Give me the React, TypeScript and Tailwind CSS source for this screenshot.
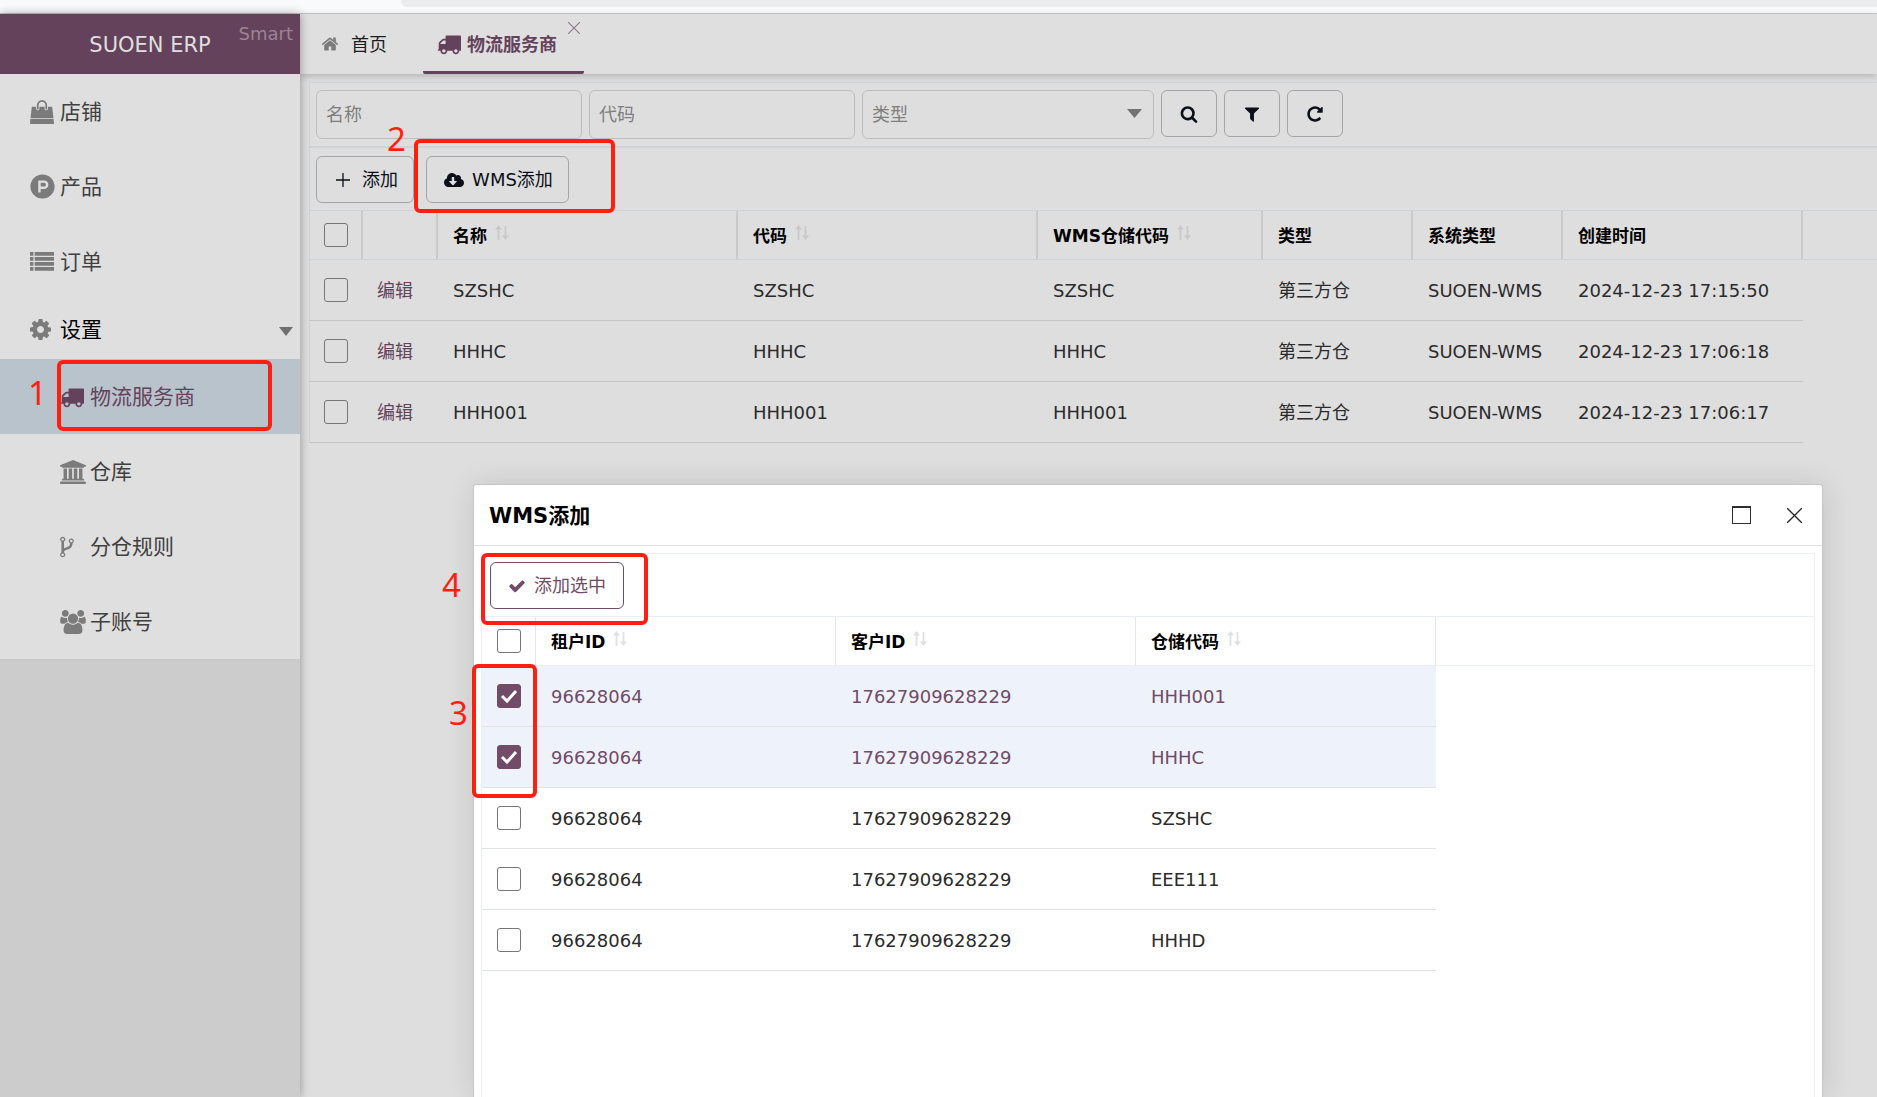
import { useState } from "react";
import type { ReactNode } from "react";
import { FaCloudDownloadAlt, FaProductHunt } from "react-icons/fa";

const paths = {
  truck:
    "M640 1408q0-52-38-90t-90-38-90 38-38 90 38 90 90 38 90-38 38-90zm-384-512h384v-256h-158q-13 0-22 9l-195 195q-9 9-9 22v30zm1280 512q0-52-38-90t-90-38-90 38-38 90 38 90 90 38 90-38 38-90zm256-1088v1024q0 15-4 26.5t-13.5 18.5-16.5 11.5-23.5 6-22.5 2-25.5 0-22.5-.5q0 106-75 181t-181 75-181-75-75-181h-384q0 106-75 181t-181 75-181-75-75-181h-64q-3 0-22.5.5t-25.5 0-22.5-2-23.5-6-16.5-11.5-13.5-18.5-4-26.5q0-26 19-45t45-19v-320q0-8-.5-35t0-38 2.5-34.5 6.5-37 14-30.5 22.5-30l198-198q19-19 50.5-32t58.5-13h160v-192q0-26 19-45t45-19h1024q26 0 45 19t19 45z",
  search:
    "M1216 832q0-185-131.5-316.5t-316.5-131.5-316.5 131.5-131.5 316.5 131.5 316.5 316.5 131.5 316.5-131.5 131.5-316.5zm512 832q0 52-38 90t-90 38q-54 0-90-38l-343-342q-179 124-399 124-143 0-273.5-55.5t-225-150-150-225-55.5-273.5 55.5-273.5 150-225 225-150 273.5-55.5 273.5 55.5 225 150 150 225 55.5 273.5q0 220-124 399l343 343q37 37 37 90z",
  filter:
    "M1595 295q17 41-14 70l-493 493v742q0 42-39 59-13 5-25 5-27 0-45-19l-256-256q-19-19-19-45v-486l-493-493q-31-29-14-70 17-39 59-39h1280q42 0 59 39z",
  repeat:
    "M1664 256v448q0 26-19 45t-45 19h-448q-42 0-59-40-17-39 14-69l138-138q-148-137-349-137-104 0-198.5 40.5t-163.5 109.5-109.5 163.5-40.5 198.5 40.5 198.5 109.5 163.5 163.5 109.5 198.5 40.5q119 0 225-52t179-147q7-10 23-12 15 0 25 9l137 138q9 8 9.5 20.5t-7.5 22.5q-109 132-264 204.5t-327 72.5q-156 0-298-61t-245-164-164-245-61-298 61-298 164-245 245-164 298-61q147 0 284.5 55.5t244.5 156.5l130-129q29-31 70-14 39 17 39 59z",
  home: "M1472 992v480q0 26-19 45t-45 19h-384v-384h-256v384h-384q-26 0-45-19t-19-45v-480q0-1 .5-3t.5-3l575-474 575 474q1 2 1 6zm223-69l-62 74q-8 9-21 11h-3q-13 0-21-7l-692-577-692 577q-12 8-24 7-13-2-21-11l-62-74q-8-10-7-23.5t11-21.5l719-599q32-26 76-26t76 26l244 204v-195q0-14 9-23t23-9h192q14 0 23 9t9 23v408l219 182q10 8 11 21.5t-7 23.5z",
  bag: "M1757 1408l35 313q3 28-16 50-19 21-48 21h-1664q-29 0-48-21-19-22-16-50l35-313h1722zm-93-839l86 775h-1708l86-775q3-24 21-40.5t43-16.5h256v128q0 53 37.5 90.5t90.5 37.5 90.5-37.5 37.5-90.5v-128h384v128q0 53 37.5 90.5t90.5 37.5 90.5-37.5 37.5-90.5v-128h256q25 0 43 16.5t21 40.5zm-384-185v256q0 26-19 45t-45 19-45-19-19-45v-256q0-106-75-181t-181-75-181 75-75 181v256q0 26-19 45t-45 19-45-19-19-45v-256q0-159 112.5-271.5t271.5-112.5 271.5 112.5 112.5 271.5z",
  list: "M0 140h256v290h-256zM350 140h1442v290h-1442zM0 516h256v290h-256zM350 516h1442v290h-1442zM0 892h256v290h-256zM350 892h1442v290h-1442zM0 1268h256v290h-256zM350 1268h1442v290h-1442z",
  cog: "M1152 896q0-106-75-181t-181-75-181 75-75 181 75 181 181 75 181-75 75-181zm512-109v222q0 12-8 23t-20 13l-185 28q-19 54-39 91 35 50 107 138 10 12 10 25t-9 23q-27 37-99 108t-94 71q-12 0-26-9l-138-108q-44 23-91 38-16 136-29 186-7 28-36 28h-222q-14 0-24.5-8.5t-11.5-21.5l-28-184q-49-16-90-37l-141 107q-10 9-25 9-14 0-25-11-126-114-165-168-7-10-7-23 0-12 8-23 15-21 51-66.5t54-70.5q-27-50-41-99l-183-27q-13-2-21-12.5t-8-23.5v-222q0-12 8-23t19-13l186-28q14-46 39-92-40-57-107-138-10-12-10-24 0-10 9-23 26-36 98.5-107.5t94.5-71.5q13 0 26 10l138 107q44-23 91-38 16-136 29-186 7-28 36-28h222q14 0 24.5 8.5t11.5 21.5l28 184q49 16 90 37l142-107q9-9 24-9 13 0 25 10 129 119 165 170 7 8 7 22 0 12-8 23-15 21-51 66.5t-54 70.5q26 50 41 98l183 28q13 2 21 12.5t8 23.5z",
  bank: "M960 0l960 384v128h-128q0 26-20.500 45t-48.500 19h-1526q-28 0-48.500-19t-20.500-45h-128v-128zm-704 640h256v768h128v-768h256v768h128v-768h256v768h128v-768h256v768h59q28 0 48.500 19t20.500 45v64h-1664v-64q0-26 20.500-45t48.500-19h59v-768zm1595 960q28 0 48.500 19t20.500 45v128h-1920v-128q0-26 20.500-45t48.500-19h1782z",
  fork: "M672 1472q0-40-28-68t-68-28-68 28-28 68 28 68 68 28 68-28 28-68zm0-1152q0-40-28-68t-68-28-68 28-28 68 28 68 68 28 68-28 28-68zm640 128q0-40-28-68t-68-28-68 28-28 68 28 68 68 28 68-28 28-68zm96 0q0 52-26 96.5t-70 69.5q-2 287-226 414-67 38-203 81-128 40-169.5 71t-41.5 100v26q44 25 70 69.5t26 96.5q0 80-56 136t-136 56-136-56-56-136q0-52 26-96.5t70-69.5v-820q-44-25-70-69.5t-26-96.5q0-80 56-136t136-56 136 56 56 136q0 52-26 96.5t-70 69.5v497q54-26 154-57 55-17 87.5-29.5t70.5-31 59-39.5 40.5-51 28-69.5 8.5-91.5q-44-25-70-69.5t-26-96.5q0-80 56-136t136-56 136 56 56 136z",
  users:
    "M529 896q-162 5-265 128h-134q-82 0-138-40.5t-56-118.5q0-353 124-353 6 0 43.5 21t97.5 42.5 119 21.5q67 0 133-23-5 37-5 66 0 139 81 256zm1071 637q0 120-73 189.5t-194 69.5h-874q-121 0-194-69.5t-73-189.5q0-53 3.5-103.5t14-109 26.5-108.5 43-97.5 62-81 85.5-53.5 111.5-20q10 0 43 21.5t73 48 107 48 135 21.5 135-21.5 107-48 73-48 43-21.5q61 0 111.5 20t85.5 53.5 62 81 43 97.5 26.5 108.5 14 109 3.5 103.5zm-1024-1277q0 106-75 181t-181 75-181-75-75-181 75-181 181-75 181 75 75 181zm704 384q0 159-112.5 271.5t-271.5 112.5-271.5-112.5-112.5-271.5 112.5-271.5 271.5-112.5 271.5 112.5 112.5 271.5zm576 225q0 78-56 118.5t-138 40.5h-134q-103-123-265-128 81-117 81-256 0-29-5-66 66 23 133 23 59 0 119-21.5t97.5-42.5 43.5-21q124 0 124 353zm-128-609q0 106-75 181t-181 75-181-75-75-181 75-181 181-75 181 75 75 181z",
  check:
    "M1671 566q0 40-28 68l-724 724-136 136q-28 28-68 28t-68-28l-136-136-362-362q-28-28-28-68t28-68l136-136q28-28 68-28t68 28l294 295 656-657q28-28 68-28t68 28l136 136q28 28 28 68z",
};

function Icon({
  name,
  className,
  viewBox = "0 0 1792 1792",
}: {
  name: keyof typeof paths;
  className: string;
  viewBox?: string;
}) {
  return (
    <svg viewBox={viewBox} fill="currentColor" className={className} aria-hidden="true">
      <path d={paths[name]} />
    </svg>
  );
}

function SortIcon() {
  return (
    <svg viewBox="0 0 14 16" className="h-4 w-3.5" aria-hidden="true">
      <path d="M3.500 15V2M10.500 1v12" fill="none" stroke="currentColor" strokeWidth="1.8" />
      <path d="M3.500 0 7 4.500H0zM10.500 15l3.500-4.500H7z" fill="currentColor" />
    </svg>
  );
}

function CloseIcon({ className }: { className: string }) {
  return (
    <svg viewBox="0 0 14 14" className={className} fill="none" stroke="currentColor" aria-hidden="true">
      <path d="M0 0l14 14M14 0L0 14" strokeWidth="1.3" />
    </svg>
  );
}

function Checkbox({ label, defaultChecked = false }: { label: string; defaultChecked?: boolean }) {
  const [checked, setChecked] = useState(defaultChecked);
  return (
    <span className="relative grid size-6">
      <input
        type="checkbox"
        aria-label={label}
        checked={checked}
        onChange={(e) => setChecked(e.target.checked)}
        className="size-6 appearance-none rounded-[3px] border border-[#767676] checked:border-[#714b67] checked:bg-[#714b67]"
      />
      {checked && (
        <svg viewBox="0 0 24 24" className="pointer-events-none absolute inset-0 size-6" aria-hidden="true">
          <path d="M5 12l5 5 9-10" fill="none" stroke="#fff" strokeWidth="3" />
        </svg>
      )}
    </span>
  );
}

// Red frame with a step number, laid over the control it wraps
function Step({ n, frame, digit }: { n: number; frame: string; digit: string }) {
  return (
    <>
      <span className={`pointer-events-none absolute z-20 rounded-md border-4 border-[#ff1f10] ${frame}`} />
      <span
        className={`pointer-events-none absolute z-20 font-['Noto_Sans',sans-serif] text-[33px] leading-8 text-[#ff1f10] ${digit}`}
      >
        {n}
      </span>
    </>
  );
}

function MenuItem({ icon, label }: { icon: ReactNode; label: string }) {
  return (
    <li>
      <a href="#" className="flex h-[75px] items-center pl-[30px] text-[#404040]">
        <span className="flex w-[30px] text-[#7b7b7b]">{icon}</span>
        <span className="pt-[3px]">{label}</span>
      </a>
    </li>
  );
}

function SubItem({
  icon,
  label,
  active,
  children,
}: {
  icon: ReactNode;
  label: string;
  active?: boolean;
  children?: ReactNode;
}) {
  return (
    <li className={active ? "relative bg-[#b9c3cc]" : "relative"}>
      <a
        href="#"
        className={`flex h-[75px] items-center pl-[60px] ${active ? "text-[#64425b]" : "text-[#404040]"}`}
      >
        <span className={`flex w-[30px] ${active ? "" : "text-[#7b7b7b]"}`}>{icon}</span>
        <span className="pt-[3px]">{label}</span>
      </a>
      {children}
    </li>
  );
}

function Sidebar() {
  return (
    <aside className="z-10 w-[300px] shrink-0 bg-[#cccccc] shadow-[0_0_9px_rgba(0,0,0,0.35)]">
      <div className="relative flex h-[60px] items-center justify-center bg-[#64425b] pt-1 text-[21px] text-[#dfdfdf]">
        SUOEN ERP
        <span className="absolute top-1.5 right-[7px] text-lg text-[#9b8495]">Smart</span>
      </div>
      <nav className="border-b border-[#c8c8c8] bg-[#dfdfdf] text-[21px]">
        <ul>
          <MenuItem icon={<Icon name="bag" className="size-6" />} label="店铺" />
          <MenuItem icon={<FaProductHunt className="size-[25px]" />} label="产品" />
          <MenuItem icon={<Icon name="list" className="size-6" />} label="订单" />
          <li>
            <button type="button" className="flex h-[60px] w-full items-center pr-[7px] pl-[30px] text-black">
              <span className="flex w-[30px] text-[#7b7b7b]">
                <Icon name="cog" viewBox="128 128 1536 1536" className="size-[21px]" />
              </span>
              <span className="pt-[3px]">设置</span>
              <svg viewBox="0 0 14 9" className="mt-1 ml-auto h-[9px] w-3.5 fill-[#6f6f6f]" aria-hidden="true">
                <path d="M0 0h14L7 9z" />
              </svg>
            </button>
            <ul>
              <SubItem icon={<Icon name="truck" className="size-6" />} label="物流服务商" active>
                <Step n={1} frame="top-px left-[57px] h-[71px] w-[215px]" digit="top-[18px] left-7" />
              </SubItem>
              <SubItem
                icon={<Icon name="bank" viewBox="0 0 1920 1792" className="h-6 w-[26px]" />}
                label="仓库"
              />
              <SubItem
                icon={<Icon name="fork" viewBox="384 0 1024 1792" className="h-6 w-3.5" />}
                label="分仓规则"
              />
              <SubItem
                icon={<Icon name="users" viewBox="-64 0 1920 1792" className="h-6 w-[26px]" />}
                label="子账号"
              />
            </ul>
          </li>
        </ul>
      </nav>
    </aside>
  );
}

function Tabs() {
  return (
    <div className="flex h-[60px] bg-[#dfdfdf] pl-[21px] text-lg shadow-[0_2px_7px_rgba(0,0,0,0.2)]">
      <a href="#" className="flex items-center text-[#1c1c1c]">
        <Icon name="home" className="mr-3 size-[18px] text-[#7b7b7b]" />
        <span className="pt-0.5">首页</span>
      </a>
      <div className="relative ml-9 flex w-[161px] items-center rounded-b-[2px] border-b-[3px] border-[#64425b] pt-[3px] pl-3.5 font-bold text-[#64425b]">
        <a href="#" className="flex items-center">
          <Icon name="truck" className="mr-1.5 size-6" />
          <span className="pt-0.5">物流服务商</span>
        </a>
        <button type="button" aria-label="关闭" className="absolute top-2 right-1 font-normal text-[#8a7a86]">
          <CloseIcon className="size-3" />
        </button>
      </div>
    </div>
  );
}

const field = "h-[49px] w-full rounded-md border border-[#bdbdbd] bg-transparent px-[9px] text-lg";
const outline = "flex h-[47px] items-center justify-center rounded-md border border-[#a3a5aa] text-lg text-[#0b0f1a]";

function Filters() {
  return (
    <form
      className="flex gap-[7px] border-b-2 border-[#cdd3d9] px-1.5 py-[7px]"
      onSubmit={(e) => e.preventDefault()}
    >
      <div className="w-[266px]">
        <input aria-label="名称" placeholder="名称" className={`${field} placeholder:text-[#7e7e7e]`} />
      </div>
      <div className="w-[266px]">
        <input aria-label="代码" placeholder="代码" className={`${field} placeholder:text-[#7e7e7e]`} />
      </div>
      <div className="relative w-[292px]">
        <select aria-label="类型" defaultValue="" className={`${field} appearance-none text-[#7e7e7e]`}>
          <option value="">类型</option>
          <option value="third">第三方仓</option>
        </select>
        <svg
          viewBox="0 0 15 9"
          className="pointer-events-none absolute top-[19px] right-3 h-[9px] w-[15px] fill-[#727272]"
          aria-hidden="true"
        >
          <path d="M0 0h15L7.500 9z" />
        </svg>
      </div>
      <button type="submit" aria-label="搜索" className={`${outline} w-14`}>
        <Icon name="search" className="size-[18px]" />
      </button>
      <button type="button" aria-label="筛选" className={`${outline} w-14`}>
        <Icon name="filter" className="size-[18px]" />
      </button>
      <button type="button" aria-label="刷新" className={`${outline} w-14`}>
        <Icon name="repeat" className="size-[18px]" />
      </button>
    </form>
  );
}

const columns = [
  { title: "名称", sort: true },
  { title: "代码", sort: true },
  { title: "WMS仓储代码", sort: true },
  { title: "类型", sort: false },
  { title: "系统类型", sort: false },
  { title: "创建时间", sort: false },
];

const providers = [
  ["SZSHC", "SZSHC", "SZSHC", "第三方仓", "SUOEN-WMS", "2024-12-23 17:15:50"],
  ["HHHC", "HHHC", "HHHC", "第三方仓", "SUOEN-WMS", "2024-12-23 17:06:18"],
  ["HHH001", "HHH001", "HHH001", "第三方仓", "SUOEN-WMS", "2024-12-23 17:06:17"],
];

function ProviderTable() {
  return (
    <table className="w-full table-fixed border-separate border-spacing-0 text-lg text-[#2b2b2b]">
      <colgroup>
        <col className="w-[53px]" />
        <col className="w-[75px]" />
        <col className="w-[300px]" />
        <col className="w-[300px]" />
        <col className="w-[225px]" />
        <col className="w-[150px]" />
        <col className="w-[150px]" />
        <col className="w-[240px]" />
        <col />
      </colgroup>
      <thead>
        <tr className="h-[49px] text-left text-[17px] text-black *:border-b *:border-b-[#cdd3d9]">
          <th className="border-r-2 border-r-[#cacaca] pl-3.5">
            <Checkbox label="全选" />
          </th>
          <th className="border-r-2 border-r-[#cacaca]" />
          {columns.map((c) => (
            <th key={c.title} className="border-r-2 border-r-[#cacaca] pl-[15px]">
              <span className="flex items-start gap-2">
                <span className="pt-0.5">{c.title}</span>
                {c.sort && (
                  <span className="pt-1 text-[#c9c9c9]">
                    <SortIcon />
                  </span>
                )}
              </span>
            </th>
          ))}
          <th />
        </tr>
      </thead>
      <tbody>
        {providers.map((row) => (
          <tr key={row[0]} className="h-[61px] *:border-b *:border-[#c5c5c5] *:last:border-b-0">
            <td className="pl-3.5">
              <Checkbox label={row[0]} />
            </td>
            <td className="pt-0.5 pl-3.5">
              <a href="#" className="text-[#64425b]">
                编辑
              </a>
            </td>
            {row.map((cell, i) => (
              <td key={i} className="pt-0.5 pl-[15px] whitespace-nowrap">
                {cell}
              </td>
            ))}
            <td />
          </tr>
        ))}
      </tbody>
    </table>
  );
}

const warehouses = [
  { code: "HHH001", checked: true },
  { code: "HHHC", checked: true },
  { code: "SZSHC", checked: false },
  { code: "EEE111", checked: false },
  { code: "HHHD", checked: false },
];

function WmsDialog() {
  return (
    <div className="absolute inset-0 z-20 flex pt-[484px] pr-[54px] pl-[473px]">
      <section
        role="dialog"
        aria-labelledby="wms-title"
        className="flex flex-1 flex-col rounded-t-[3px] border border-b-0 border-[#c6c6c6] bg-white shadow-[1px_1px_30px_rgba(0,0,0,0.12)]"
      >
        <header className="flex h-[61px] items-center border-b border-[#e3e3e3] pr-5 pl-[15px] text-[#2b2b2b]">
          <h2 id="wms-title" className="flex-1 pt-1 text-[21px] font-bold text-black">
            WMS添加
          </h2>
          <button type="button" aria-label="最大化" className="mr-9">
            <span className="block h-[18px] w-[19px] border border-t-2 border-[#2e2e2e]" />
          </button>
          <button type="button" aria-label="关闭">
            <CloseIcon className="size-[15px]" />
          </button>
        </header>
        <div className="mx-[7px] mt-[7px] flex-1 border border-b-0 border-[#e9eff5]">
          <div className="relative border-b border-[#e9eff5] px-2 pt-2 pb-[7px]">
            <button
              type="button"
              className="flex h-[47px] w-[134px] items-center justify-center gap-2 rounded-md border border-[#714b67] text-lg text-[#714b67]"
            >
              <Icon name="check" className="size-[18px]" />
              添加选中
            </button>
            <Step n={4} frame="-top-px -left-px h-[72px] w-[167px]" digit="top-[15px] -left-10" />
          </div>
          <table className="relative w-full table-fixed border-separate border-spacing-0 text-lg text-[#2b2b2b]">
            <colgroup>
              <col className="w-[54px]" />
              <col className="w-[300px]" />
              <col className="w-[300px]" />
              <col className="w-[300px]" />
              <col />
            </colgroup>
            <thead>
              <tr className="h-[49px] text-left text-[17px] text-black *:border-b *:border-b-[#e9eff5]">
                <th className="border-r border-r-[#e3e6ea] pl-[15px]">
                  <Checkbox label="全选" />
                </th>
                {["租户ID", "客户ID", "仓储代码"].map((title) => (
                  <th key={title} className="border-r border-r-[#e3e6ea] pl-[15px]">
                    <span className="flex items-start gap-2">
                      <span className="pt-0.5">{title}</span>
                      <span className="pt-1 text-[#e0e0e0]">
                        <SortIcon />
                      </span>
                    </span>
                  </th>
                ))}
                <th />
              </tr>
            </thead>
            <tbody>
              {warehouses.map((w, i) => (
                <tr
                  key={w.code}
                  className={`h-[61px] *:border-b *:border-[#e1e3e6] *:last:border-b-0 ${
                    w.checked ? "text-[#714b67] *:not-last:bg-[#eef3fb]" : ""
                  }`}
                >
                  <td className="relative pl-[15px]">
                    <Checkbox label={w.code} defaultChecked={w.checked} />
                    {i === 0 && (
                      <Step n={3} frame="-top-0.5 -left-2.5 h-[134px] w-[65px]" digit="top-[31px] -left-[33px]" />
                    )}
                  </td>
                  <td className="pt-0.5 pl-[15px]">96628064</td>
                  <td className="pt-0.5 pl-[15px]">17627909628229</td>
                  <td className="pt-0.5 pl-[15px]">{w.code}</td>
                  <td />
                </tr>
              ))}
            </tbody>
          </table>
        </div>
      </section>
    </div>
  );
}

export default function App() {
  return (
    <div className="relative flex min-h-screen flex-col bg-[#dedede] font-['DejaVu_Sans','Noto_Sans_CJK_SC',sans-serif]">
      <div className="h-3.5 border-b border-[#c8c8c8] bg-[#f9fafc] pl-[401px]">
        <div className="h-[7px] rounded-bl-md bg-[#ebecee]" />
      </div>
      <div className="flex flex-1">
        <Sidebar />
        <main className="min-w-0 flex-1">
          <Tabs />
          <div className="mt-2 ml-[9px] border-t border-l border-[#cdd3d9]">
            <Filters />
            <div className="flex gap-3 border-b border-[#cdd3d9] px-1.5 pt-2 pb-[7px]">
              <button type="button" className={`${outline} w-[98px] gap-3 pl-1`}>
                <svg viewBox="0 0 14 14" className="size-3.5" aria-hidden="true">
                  <path d="M7 0v14M0 7h14" stroke="currentColor" strokeWidth="1.3" />
                </svg>
                添加
              </button>
              <div className="relative">
                <button type="button" className={`${outline} w-[143px] gap-2 pl-0.5`}>
                  <FaCloudDownloadAlt className="size-5" />
                  WMS添加
                </button>
                <Step n={2} frame="-top-[17px] -left-3 h-[74px] w-[201px]" digit="-top-[33px] -left-[39px]" />
              </div>
            </div>
            <ProviderTable />
          </div>
        </main>
      </div>
      <WmsDialog />
    </div>
  );
}
